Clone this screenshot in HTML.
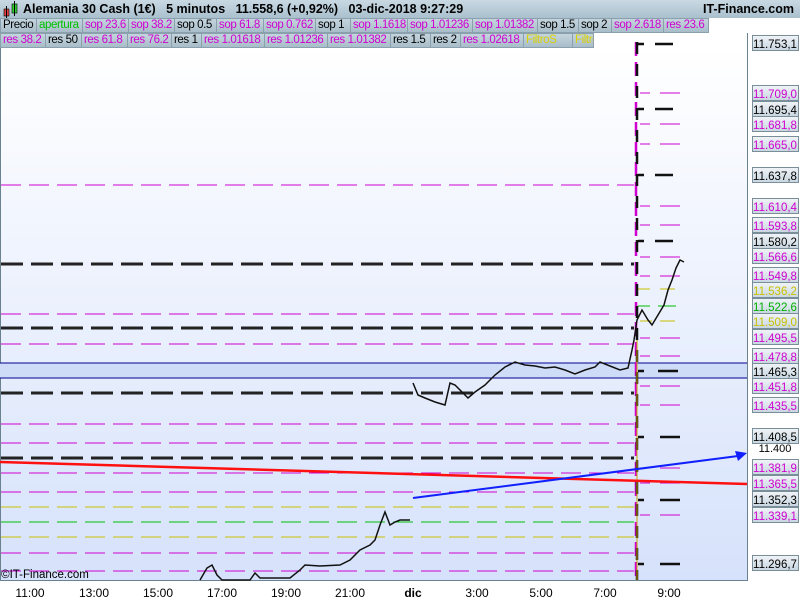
<!DOCTYPE html>
<html><head><meta charset="utf-8"><style>
body{margin:0;width:800px;height:600px;overflow:hidden;font-family:"Liberation Sans",sans-serif;background:#fff}
.hdr{position:absolute;left:0;top:0;width:800px;height:18px;background:linear-gradient(#c9d9e3,#a9c0cd);font-size:12.5px;font-weight:bold;color:#000}
.row{position:absolute;left:0;height:15px;font-size:11.5px}
.row span{position:absolute;top:0;box-sizing:border-box;height:15px;border:1px solid #8aa0ad;background:linear-gradient(#c5d5de,#a8bdc9);padding:0 0 0 2px;line-height:13px;white-space:nowrap;overflow:hidden;letter-spacing:-0.4px}
.m{color:#d000d0}.k{color:#000}.g{color:#00c000}.y{color:#d8d000}
</style></head><body>
<svg width="800" height="600" style="position:absolute;left:0;top:0" font-family="Liberation Sans, sans-serif">
<defs><linearGradient id="bg" x1="0" y1="0" x2="0" y2="1"><stop offset="0" stop-color="#ffffff"/><stop offset="1" stop-color="#d6e2fb"/></linearGradient>
<linearGradient id="lb" x1="0" y1="0" x2="0" y2="1"><stop offset="0" stop-color="#f0f4f8"/><stop offset="1" stop-color="#c8d6e0"/></linearGradient></defs>
<rect x="0" y="48" width="747" height="532" fill="url(#bg)"/>
<rect x="747" y="33" width="53" height="547" fill="#fff"/>
<rect x="0" y="580" width="800" height="20" fill="#fff"/>
<line x1="0.5" y1="48" x2="0.5" y2="580" stroke="#6a8290"/>
<line x1="747.5" y1="33" x2="747.5" y2="580" stroke="#6a8290"/>
<line x1="0" y1="580.5" x2="748" y2="580.5" stroke="#6a8290"/>
<rect x="0" y="363" width="747" height="15" fill="#cfdcf7"/>
<line x1="0" y1="363" x2="747" y2="363" stroke="#000090"/>
<line x1="0" y1="378" x2="747" y2="378" stroke="#000090"/>
<g fill="none">
<g stroke="#d000d0" stroke-dasharray="20 8">
<path d="M1 185H634M1 314H634M1 344H634M1 424H634M1 443H634M1 473H634M1 492H634M1 553H634M1 571H634"/></g>
<g stroke="#222" stroke-width="3" stroke-dasharray="22 8">
<path d="M1 264H634M1 328H634M1 393H634M1 458H634"/></g>
<path d="M1 507H634M1 537H634" stroke="#c8c000" stroke-dasharray="20 8"/>
<path d="M1 522H634" stroke="#00c000" stroke-dasharray="20 8"/>
<g stroke="#d000d0"><path d="M640 93h10M660 93h20M640 124h10M660 124h20M640 144h10M660 144h20M640 206h10M660 206h20M640 225h10M660 225h20M640 257h10M660 257h20M640 276h10M660 276h20M640 338h10M660 338h20M640 356h10M660 356h20M640 386h10M660 386h20M640 405h10M660 405h20M640 468h10M660 468h20M640 483h10M660 483h20M640 515h10M660 515h20"/></g>
<g stroke="#111" stroke-width="2.5"><path d="M638 44h6M655 44h18M638 109h6M655 109h18M638 175h6M655 175h18M638 241h6M655 241h18M638 371h6M658 371h20M638 437h6M660 437h20M638 500h6M660 500h20M638 564h6M660 564h20"/></g>
<path d="M638 289h12M660 289h15M640 321h12M660 321h15" stroke="#c8c000"/>
<path d="M638 306h12M658 306h18" stroke="#00c000"/>
<path d="M636 42V580" stroke="#d000d0" stroke-width="2.5" stroke-dasharray="14 6"/>
<path d="M637 42V580" stroke="#111" stroke-width="2.5" stroke-dasharray="12 10"/>
<path d="M637 340V580" stroke="#c8a000" stroke-width="1"/>
<path d="M0 462L747 484" stroke="#ff1010" stroke-width="2.5"/>
<path d="M413 498L738 456" stroke="#1020ff" stroke-width="2"/>
<path d="M747 453L735 451L738 461Z" fill="#1020ff" stroke="none"/>
<polyline stroke="#111" stroke-width="1.5" points="200,580 207,568 212,565 217,575 222,580 250,580 255,573 260,578 290,578 300,570 305,565 320,566 340,565 350,560 360,550 370,545 375,540 380,525 385,512 390,525 395,522 400,520 410,520"/>
<polyline stroke="#111" stroke-width="1.5" points="413,383 418,395 425,398 435,402 445,405 450,383 455,385 462,392 468,398 475,392 485,385 495,375 505,367 515,362 525,365 535,366 545,368 555,367 565,370 575,374 585,370 595,367 600,362 610,366 620,370 628,368 632,350 634,340 637,320 642,310 648,320 652,325 658,315 664,305 668,290 672,280 676,268 680,260 684,262"/>
</g>
<g font-size="11.5" text-anchor="middle">
<g fill="url(#lb)" stroke="#7a8e9a">
<rect x="752.5" y="35.5" width="46" height="15"/><rect x="752.5" y="85.5" width="46" height="15"/><rect x="752.5" y="101.5" width="46" height="15"/><rect x="752.5" y="116.5" width="46" height="15"/><rect x="752.5" y="136.5" width="46" height="15"/><rect x="752.5" y="167.5" width="46" height="15"/><rect x="752.5" y="198.5" width="46" height="15"/><rect x="752.5" y="217.5" width="46" height="15"/><rect x="752.5" y="233.5" width="46" height="15"/><rect x="752.5" y="248.5" width="46" height="15"/><rect x="752.5" y="267.5" width="46" height="15"/><rect x="752.5" y="282.5" width="46" height="15"/><rect x="752.5" y="298.5" width="46" height="15"/><rect x="752.5" y="313.5" width="46" height="15"/><rect x="752.5" y="329.5" width="46" height="15"/><rect x="752.5" y="348.5" width="46" height="15"/><rect x="752.5" y="363.5" width="46" height="15"/><rect x="752.5" y="378.5" width="46" height="15"/><rect x="752.5" y="397.5" width="46" height="15"/><rect x="752.5" y="428.5" width="46" height="15"/><rect x="752.5" y="459.5" width="46" height="15"/><rect x="752.5" y="475.5" width="46" height="15"/><rect x="752.5" y="491.5" width="46" height="15"/><rect x="752.5" y="507.5" width="46" height="15"/><rect x="752.5" y="555.5" width="46" height="15"/>
</g>
<g fill="#000"><text x="775" y="48">11.753,1</text><text x="775" y="114">11.695,4</text><text x="775" y="180">11.637,8</text><text x="775" y="246">11.580,2</text><text x="775" y="376">11.465,3</text><text x="775" y="441">11.408,5</text><text x="775" y="452" font-size="11">11.400</text><text x="775" y="504">11.352,3</text><text x="775" y="568">11.296,7</text></g>
<g fill="#d000d0"><text x="775" y="98">11.709,0</text><text x="775" y="129">11.681,8</text><text x="775" y="149">11.665,0</text><text x="775" y="211">11.610,4</text><text x="775" y="230">11.593,8</text><text x="775" y="261">11.566,6</text><text x="775" y="280">11.549,8</text><text x="775" y="342">11.495,5</text><text x="775" y="361">11.478,8</text><text x="775" y="391">11.451,8</text><text x="775" y="410">11.435,5</text><text x="775" y="472">11.381,9</text><text x="775" y="488">11.365,5</text><text x="775" y="520">11.339,1</text></g>
<g fill="#c8c000"><text x="775" y="295">11.536,2</text><text x="775" y="326">11.509,0</text></g>
<text x="775" y="311" fill="#00b000">11.522,6</text>
<g fill="#000" font-size="12"><text x="30" y="597">11:00</text><text x="94" y="597">13:00</text><text x="158" y="597">15:00</text><text x="222" y="597">17:00</text><text x="286" y="597">19:00</text><text x="350" y="597">21:00</text><text x="413" y="597" font-weight="bold">dic</text><text x="477" y="597">3:00</text><text x="541" y="597">5:00</text><text x="605" y="597">7:00</text><text x="669" y="597">9:00</text></g>
<text x="45" y="578" font-size="11.5" fill="#000">©IT-Finance.com</text>
</g>
</svg>
<div class="hdr"><svg width="18" height="18" style="position:absolute;left:2px;top:0"><rect x="2" y="9" width="5" height="7" fill="#e04040" stroke="#000" stroke-width=".6"/><rect x="10" y="4" width="5" height="9" fill="#30d030" stroke="#000" stroke-width=".6"/><path d="M4.5 6v12M12.5 1v15" stroke="#000"/></svg><span style="position:absolute;left:23px;top:2px;white-space:pre">Alemania 30 Cash (1€)   5 minutos   11.558,6 (+0,92%)   03-dic-2018 9:27:29</span><span style="position:absolute;right:6px;top:2px">IT-Finance.com</span></div>
<div class="row" style="top:18px">
<span class="k" style="left:0;width:37px">Precio</span><span class="g" style="left:36px;width:47px">apertura</span><span class="m" style="left:82px;width:47px">sop 23.6</span><span class="m" style="left:128px;width:47px">sop 38.2</span><span class="k" style="left:174px;width:43px">sop 0.5</span><span class="m" style="left:216px;width:48px">sop 61.8</span><span class="m" style="left:263px;width:53px">sop 0.762</span><span class="k" style="left:315px;width:36px">sop 1</span><span class="m" style="left:350px;width:58px">sop 1.1618</span><span class="m" style="left:407px;width:66px">sop 1.01236</span><span class="m" style="left:472px;width:66px">sop 1.01382</span><span class="k" style="left:537px;width:42px">sop 1.5</span><span class="k" style="left:578px;width:34px">sop 2</span><span class="m" style="left:611px;width:53px">sop 2.618</span><span class="m" style="left:663px;width:46px">res 23.6</span></div>
<div class="row" style="top:33px">
<span class="m" style="left:0;width:46px">res 38.2</span><span class="k" style="left:45px;width:37px">res 50</span><span class="m" style="left:81px;width:47px">res 61.8</span><span class="m" style="left:127px;width:45px">res 76.2</span><span class="k" style="left:171px;width:31px">res 1</span><span class="m" style="left:201px;width:64px">res 1.01618</span><span class="m" style="left:264px;width:64px">res 1.01236</span><span class="m" style="left:327px;width:64px">res 1.01382</span><span class="k" style="left:390px;width:41px">res 1.5</span><span class="k" style="left:430px;width:31px">res 2</span><span class="m" style="left:460px;width:64px">res 1.02618</span><span class="y" style="left:523px;width:50px">FiltroS</span><span class="y" style="left:572px;width:22px">FiltroR</span></div>
</body></html>
